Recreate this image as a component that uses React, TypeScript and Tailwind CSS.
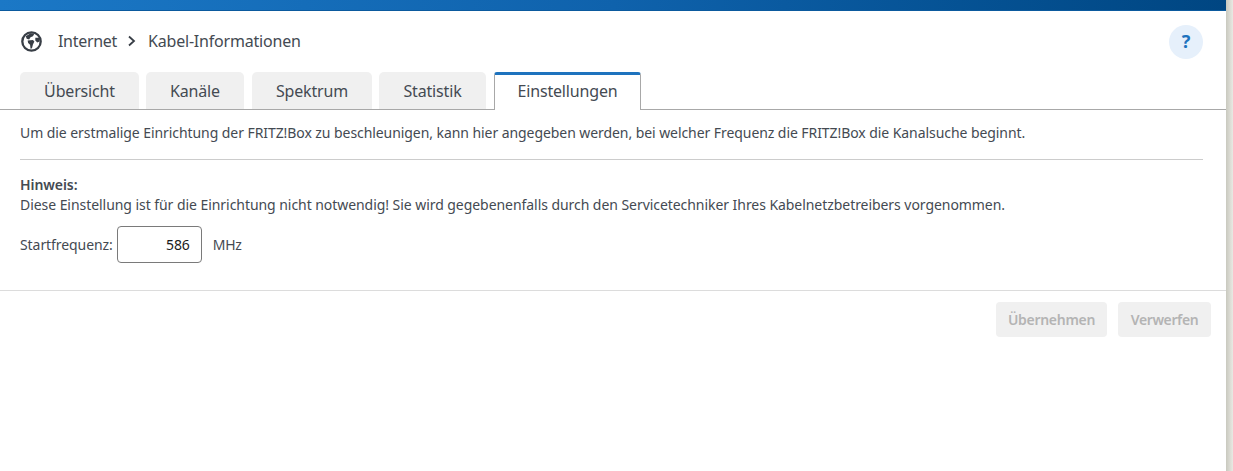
import React from "react";

const font = { fontFamily: '"Noto Sans", sans-serif' };

function Tab({ label, active, w }: { label: string; active?: boolean; w: string }) {
  return active ? (
    <div className={`${w} h-[38px] -mb-px pb-[3px] flex items-center justify-center bg-white border border-b-0 border-[#a8a8a8] border-t-[3px] border-t-[#1e73be] rounded-t-[3px] text-[16px] tracking-[-0.17px] text-[#444a52] relative z-10`}>
      {label}
    </div>
  ) : (
    <div className={`${w} h-[37px] pt-[1px] flex items-center justify-center bg-[#f0f0f0] rounded-t-[5px] text-[16px] tracking-[-0.17px] text-[#444a52]`}>
      {label}
    </div>
  );
}

export default function App() {
  return (
    <div className="flex h-[471px] w-[1233px] overflow-hidden bg-white" style={font}>
      <div className="w-[1226px] flex flex-col">
        <div className="h-[11px] bg-gradient-to-r from-[#1b78c6] via-[#0f62ac] to-[#004682] border-b border-[#0b5a9e]" />
        <div className="h-[61px] flex items-center justify-between pl-[20px] pr-[23px]">
          <div className="flex items-center text-[16px] tracking-[-0.2px] text-[#444a52] pb-[1px]">
            <svg viewBox="0 0 24 24" className="w-[23px] h-[23px] mr-[15px]" aria-hidden="true">
              <circle cx="12" cy="12" r="9.6" fill="none" stroke="#383e46" strokeWidth="2.4" />
              <path d="M6 6.5 L11 3.5 L15 4 L13.5 6.5 L11 7.5 L9.5 10 L7 9 Z" fill="#383e46" />
              <path d="M8 11 L13.5 10.5 L15 12 L13.5 15 L12.5 19 L11 19.5 L10.5 15.5 L8.5 13.5 Z" fill="#383e46" />
              <path d="M16 8 L20 8 L20.5 12 L18 13 L16 11 Z" fill="#383e46" />
            </svg>
            <span className="tracking-[-0.3px]">Internet</span>
            <svg viewBox="0 0 10 12" className="w-[10px] h-[12px] ml-[10px] mr-[11px]" aria-hidden="true">
              <path d="M2 1.5 L7 6 L2 10.5" fill="none" stroke="#383e46" strokeWidth="1.8" />
            </svg>
            <span>Kabel-Informationen</span>
          </div>
          <div className="w-[34px] h-[34px] rounded-full bg-[#e6f0fb] flex items-center justify-center text-[#1e73be] text-[18px] font-bold">?</div>
        </div>
        <div className="flex items-end pl-[20px] h-[38px] border-b border-[#a8a8a8]">
          <Tab label="Übersicht" w="w-[119px]" />
          <div className="ml-[7px]"><Tab label="Kanäle" w="w-[98px]" /></div>
          <div className="ml-[8px]"><Tab label="Spektrum" w="w-[120px]" /></div>
          <div className="ml-[7px]"><Tab label="Statistik" w="w-[107px]" /></div>
          <div className="ml-[8px]"><Tab label="Einstellungen" w="w-[147px]" active /></div>
        </div>
        <div className="pl-[20px] pr-[23px] text-[14px] tracking-[-0.07px] text-[#444a52]">
          <p className="mt-[13px] leading-[20px]">Um die erstmalige Einrichtung der FRITZ!Box zu beschleunigen, kann hier angegeben werden, bei welcher Frequenz die FRITZ!Box die Kanalsuche beginnt.</p>
          <div className="mt-[16px] border-t border-[#cccccc]" />
          <p className="mt-[15px] leading-[20px] font-semibold">Hinweis:</p>
          <p className="leading-[20px] tracking-[-0.055px]">Diese Einstellung ist für die Einrichtung nicht notwendig! Sie wird gegebenenfalls durch den Servicetechniker Ihres Kabelnetzbetreibers vorgenommen.</p>
          <div className="mt-[11px] flex items-center h-[37px]">
            <span>Startfrequenz:</span>
            <div className="ml-[4px] w-[85px] h-[37px] border border-[#7a7a7a] rounded-[4px] flex items-center justify-end pr-[11px] text-[#1a1a1a]">586</div>
            <span className="ml-[11px] tracking-[-0.3px]">MHz</span>
          </div>
        </div>
        <div className="mt-[27px] border-t border-[#dcdcdc]" />
        <div className="flex justify-end gap-[11px] pr-[15px] pt-[11px]">
          <div className="w-[111px] h-[35px] rounded-[4px] bg-[#f0f0f0] text-[#b4b4b4] text-[14px] tracking-[-0.3px] font-semibold flex items-center justify-center">Übernehmen</div>
          <div className="w-[93px] h-[35px] rounded-[4px] bg-[#f0f0f0] text-[#b4b4b4] text-[14px] tracking-[-0.4px] font-semibold flex items-center justify-center">Verwerfen</div>
        </div>
      </div>
      <div className="w-[7px] bg-gradient-to-r from-[#c9c9bf] to-[#e9e9e3]" />
    </div>
  );
}
